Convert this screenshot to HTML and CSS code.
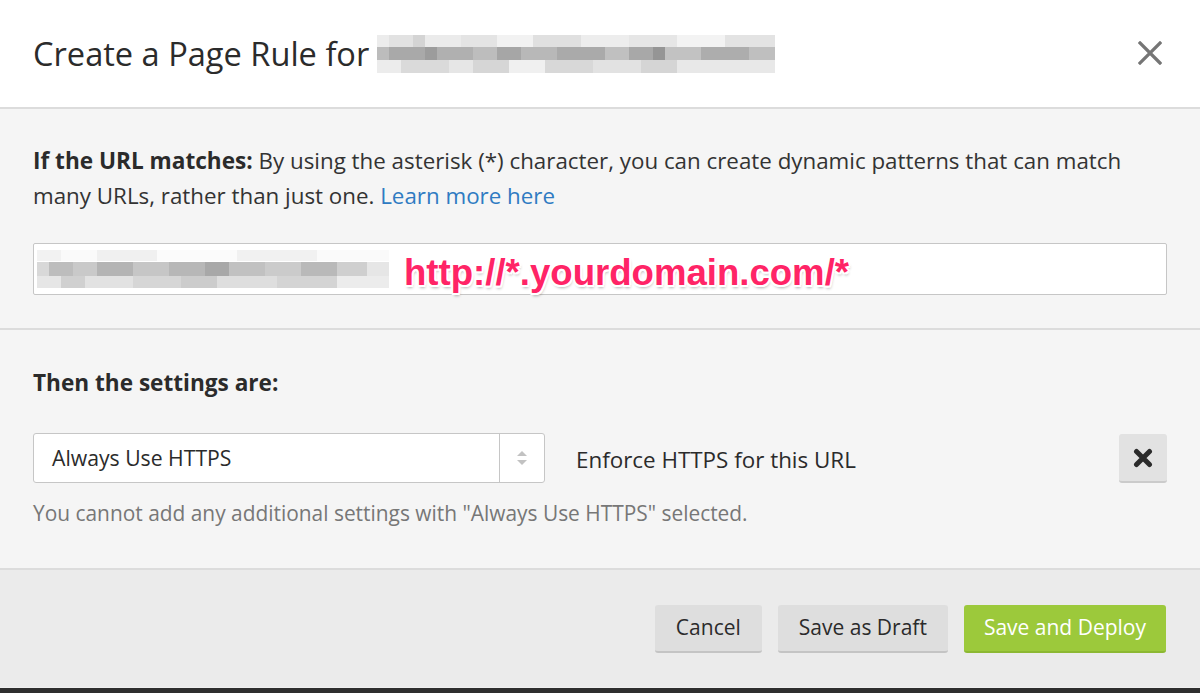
FILE: index.html
```html
<!DOCTYPE html>
<html lang="en">
<head>
<meta charset="utf-8">
<title>Create a Page Rule</title>
<link rel="stylesheet" href="styles.css">
</head>
<body>
<div class="modal">
  <header class="modal-header">
    <h1 class="title">Create a Page Rule for <span class="blur blur-title" aria-hidden="true"></span></h1>
    <button class="close" aria-label="Close">
      <svg width="24" height="24" viewBox="0 0 24 24"><path d="M2 2 L22 22 M22 2 L2 22" stroke="#757575" stroke-width="3.2" stroke-linecap="square" fill="none"/></svg>
    </button>
  </header>

  <section class="section section-url">
    <p class="text"><strong>If the URL matches:</strong> By using the asterisk (*) character, you can create dynamic patterns that can match many URLs, rather than just one. <a href="#" class="link">Learn more here</a></p>
    <div class="input">
      <span class="blur blur-input" aria-hidden="true"></span>
      <span class="pink">http://*.yourdomain.com/*</span>
    </div>
  </section>

  <section class="section section-settings">
    <p class="text"><strong>Then the settings are:</strong></p>
    <div class="setting-row">
      <div class="select">
        <span class="select-value">Always Use HTTPS</span>
        <span class="select-arrows">
          <svg width="12" height="18" viewBox="0 0 12 18"><path d="M6 2 L11 7 L1 7 Z" fill="#c2c2c2"/><path d="M1 11 L11 11 L6 16 Z" fill="#c2c2c2"/></svg>
        </span>
      </div>
      <span class="setting-desc">Enforce HTTPS for this URL</span>
      <button class="remove" aria-label="Remove">
        <svg width="20" height="20" viewBox="0 0 20 20"><path d="M3.5 3.5 L16.5 16.5 M16.5 3.5 L3.5 16.5" stroke="#2b2b2b" stroke-width="5" stroke-linecap="round" fill="none"/></svg>
      </button>
    </div>
    <p class="help">You cannot add any additional settings with "Always Use HTTPS" selected.</p>
  </section>

  <footer class="modal-footer">
    <button class="btn">Cancel</button>
    <button class="btn">Save as Draft</button>
    <button class="btn btn-primary">Save and Deploy</button>
  </footer>
  <div class="bottom-bar"></div>
</div>
</body>
</html>
```

FILE: styles.css
```css
* { box-sizing: border-box; }
html, body { margin: 0; padding: 0; }
body {
  width: 1200px;
  height: 693px;
  overflow: hidden;
  font-family: "Open Sans", "Noto Sans", sans-serif;
  color: #333;
  background: #f5f5f5;
}
.modal {
  display: flex;
  flex-direction: column;
  height: 693px;
}
.modal-header {
  height: 109px;
  background: #fff;
  border-bottom: 2px solid #dcdcdc;
  display: flex;
  align-items: center;
  justify-content: space-between;
  padding: 0 33px;
  flex-shrink: 0;
}
.title {
  margin: 0;
  font-weight: 400;
  font-size: 32.6px;
  color: #2b2b2b;
  display: flex;
  align-items: center;
  gap: 8px;
}
.close {
  border: 0;
  background: none;
  padding: 0;
  margin-right: 5px;
  margin-top: -2px;
  display: flex;
}
.blur { display: inline-block; }
.blur-title {
  width: 398px;
  height: 38px;
  background:
    linear-gradient(90deg, #ececec 0 12px, #e2e2e2 12px 36px, #d4d4d4 36px 48px, #ebebeb 48px 84px, #e4e4e4 84px 120px, #f2f2f2 120px 156px, #e0e0e0 156px 204px, #ededed 204px 252px, #e6e6e6 252px 300px, #f3f3f3 300px 348px, #e3e3e3 348px 398px) top / 100% 12px no-repeat,
    linear-gradient(90deg, #bcbcbc 0 12px, #a9a9a9 12px 48px, #9c9c9c 48px 60px, #b0b0b0 60px 96px, #bdbdbd 96px 120px, #a6a6a6 120px 144px, #b8b8b8 144px 180px, #aaaaaa 180px 228px, #c0c0c0 228px 252px, #a8a8a8 252px 276px, #959595 276px 288px, #c2c2c2 288px 324px, #adadad 324px 372px, #bfbfbf 372px 398px) center / 100% 13px no-repeat,
    linear-gradient(90deg, #ececec 0 24px, #dadada 24px 72px, #e6e6e6 72px 96px, #d6d6d6 96px 132px, #f0f0f0 132px 168px, #d8d8d8 168px 216px, #e2e2e2 216px 264px, #d5d5d5 264px 300px, #e8e8e8 300px 398px) bottom / 100% 13px no-repeat;
}

.section {
  padding: 0 33px;
  background: #f5f5f5;
  flex-shrink: 0;
}
.text {
  margin: 0;
  font-size: 22.35px;
  line-height: 35px;
}
.text strong { font-weight: 700; color: #2b2b2b; font-size: 22.6px; line-height: 35px; }
.link { color: #2f7bc2; text-decoration: none; }

.section-url {
  padding-top: 34px;
  padding-bottom: 33px;
  border-bottom: 2px solid #dcdcdc;
}
.input {
  margin-top: 30px;
  height: 52px;
  background: #fff;
  border: 1px solid #c6c6c6;
  border-radius: 2px;
  display: flex;
  align-items: center;
  padding-left: 3px;
}
.blur-input {
  width: 352px;
  height: 38px;
  background:
    linear-gradient(90deg, #f2f2f2 0 24px, #fafafa 24px 60px, #f0f0f0 60px 120px, #fbfbfb 120px 200px, #f1f1f1 200px 280px, #fafafa 280px 352px) top / 100% 11px no-repeat,
    linear-gradient(90deg, #d8d8d8 0 12px, #bdbdbd 12px 36px, #c9c9c9 36px 60px, #b4b4b4 60px 96px, #c6c6c6 96px 132px, #b7b7b7 132px 168px, #a8a8a8 168px 192px, #c1c1c1 192px 228px, #cbcbcb 228px 264px, #b9b9b9 264px 300px, #cfcfcf 300px 330px, #e6e6e6 330px 352px) center / 100% 14px no-repeat,
    linear-gradient(90deg, #e6e6e6 0 24px, #d0d0d0 24px 48px, #e2e2e2 48px 96px, #d6d6d6 96px 144px, #cccccc 144px 180px, #dedede 180px 240px, #d4d4d4 240px 300px, #ececec 300px 352px) bottom / 100% 13px no-repeat;
}
.pink {
  margin-left: 15px;
  font-family: "Liberation Sans", Arial, sans-serif;
  font-weight: 700;
  font-size: 36.6px;
  color: #ff2466;
  text-shadow:
    -1.5px -1.5px 0 #fff, 1.5px -1.5px 0 #fff, -1.5px 1.5px 0 #fff, 1.5px 1.5px 0 #fff,
    0 2px 0 #fff, 2px 0 0 #fff, 0 -2px 0 #fff, -2px 0 0 #fff,
    1px 3px 3px rgba(0,0,0,0.3);
  margin-top: 7px;
}

.section-settings {
  padding-top: 35px;
  padding-bottom: 37px;
  border-bottom: 2px solid #dcdcdc;
}
.setting-row {
  margin-top: 33px;
  display: flex;
  align-items: center;
}
.select {
  width: 512px;
  height: 50px;
  background: #fff;
  border: 1px solid #c6c6c6;
  border-radius: 3px;
  display: flex;
  align-items: center;
}
.select-value {
  flex: 1;
  padding-left: 18px;
  font-size: 21.2px;
  color: #2b2b2b;
  margin-top: -2px;
}
.select-arrows {
  width: 45px;
  height: 100%;
  border-left: 1px solid #c6c6c6;
  display: flex;
  align-items: center;
  justify-content: center;
}
.setting-desc {
  margin-left: 31px;
  font-size: 22.4px;
  color: #2b2b2b;
  flex: 1;
  margin-top: 2px;
}
.remove {
  width: 48px;
  height: 49px;
  border: 0;
  border-bottom: 2px solid #cbcbcb;
  border-radius: 3px;
  background: #e2e2e2;
  display: flex;
  align-items: center;
  justify-content: center;
  padding: 2px 0 0;
}
.help {
  margin: 13px 0 0;
  font-size: 20.9px;
  line-height: 35px;
  color: #777;
}

.modal-footer {
  flex: 1;
  background: #ebebeb;
  display: flex;
  justify-content: flex-end;
  align-items: flex-start;
  gap: 16px;
  padding: 35px 34px 0;
}
.btn {
  height: 48px;
  border: 0;
  border-bottom: 2px solid #c4c4c4;
  border-radius: 3px;
  background: #dedede;
  font-family: "Open Sans", "Noto Sans", sans-serif;
  font-size: 21px;
  color: #2b2b2b;
  padding: 0 21px 2px;
}
.btn-primary {
  background: #9cc93b;
  border-bottom-color: #8cb832;
  color: #fff;
  padding: 0 20px 2px;
}
.bottom-bar {
  height: 6px;
  flex-shrink: 0;
  background: #2e2e2e;
  border-top: 1px solid #f0f0f0;
}
```
